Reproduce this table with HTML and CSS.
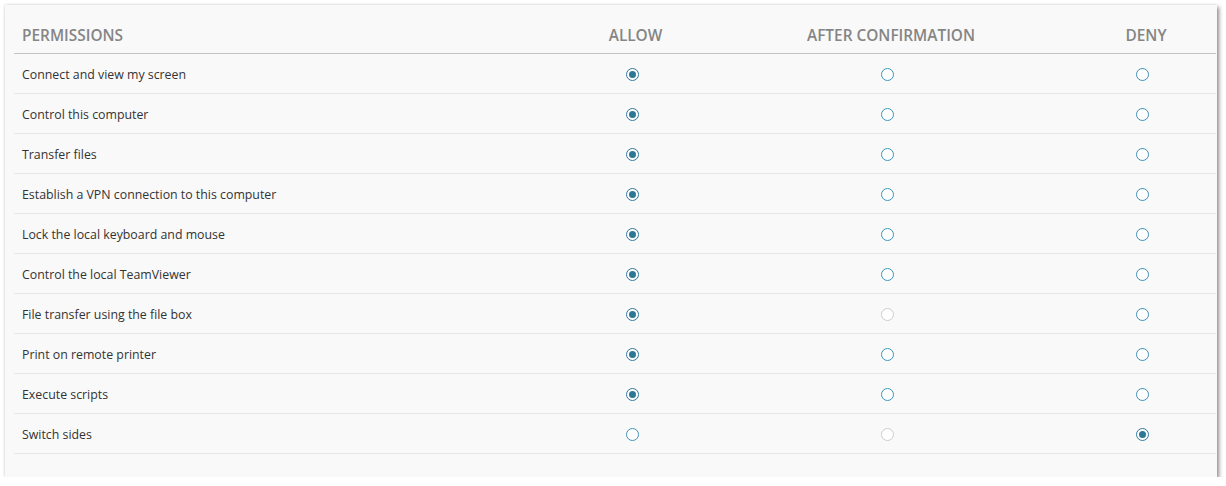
FILE: index.html
```html
<!DOCTYPE html>
<html lang="en">
<head>
<meta charset="utf-8">
<title>Permissions</title>
<link rel="stylesheet" href="styles.css">
</head>
<body>
<div class="card">
  <div class="table">
    <div class="row head">
      <div class="cell name">PERMISSIONS</div>
      <div class="cell">ALLOW</div>
      <div class="cell">AFTER CONFIRMATION</div>
      <div class="cell">DENY</div>
    </div>
    <div class="row">
      <div class="cell name">Connect and view my screen</div>
      <div class="cell"><span class="radio on"></span></div>
      <div class="cell"><span class="radio"></span></div>
      <div class="cell"><span class="radio"></span></div>
    </div>
    <div class="row">
      <div class="cell name">Control this computer</div>
      <div class="cell"><span class="radio on"></span></div>
      <div class="cell"><span class="radio"></span></div>
      <div class="cell"><span class="radio"></span></div>
    </div>
    <div class="row">
      <div class="cell name">Transfer files</div>
      <div class="cell"><span class="radio on"></span></div>
      <div class="cell"><span class="radio"></span></div>
      <div class="cell"><span class="radio"></span></div>
    </div>
    <div class="row">
      <div class="cell name">Establish a VPN connection to this computer</div>
      <div class="cell"><span class="radio on"></span></div>
      <div class="cell"><span class="radio"></span></div>
      <div class="cell"><span class="radio"></span></div>
    </div>
    <div class="row">
      <div class="cell name">Lock the local keyboard and mouse</div>
      <div class="cell"><span class="radio on"></span></div>
      <div class="cell"><span class="radio"></span></div>
      <div class="cell"><span class="radio"></span></div>
    </div>
    <div class="row">
      <div class="cell name">Control the local TeamViewer</div>
      <div class="cell"><span class="radio on"></span></div>
      <div class="cell"><span class="radio"></span></div>
      <div class="cell"><span class="radio"></span></div>
    </div>
    <div class="row">
      <div class="cell name">File transfer using the file box</div>
      <div class="cell"><span class="radio on"></span></div>
      <div class="cell"><span class="radio disabled"></span></div>
      <div class="cell"><span class="radio"></span></div>
    </div>
    <div class="row">
      <div class="cell name">Print on remote printer</div>
      <div class="cell"><span class="radio on"></span></div>
      <div class="cell"><span class="radio"></span></div>
      <div class="cell"><span class="radio"></span></div>
    </div>
    <div class="row">
      <div class="cell name">Execute scripts</div>
      <div class="cell"><span class="radio on"></span></div>
      <div class="cell"><span class="radio"></span></div>
      <div class="cell"><span class="radio"></span></div>
    </div>
    <div class="row">
      <div class="cell name">Switch sides</div>
      <div class="cell"><span class="radio"></span></div>
      <div class="cell"><span class="radio disabled"></span></div>
      <div class="cell"><span class="radio on"></span></div>
    </div>
  </div>
</div>
</body>
</html>
```
FILE: styles.css
```css
html, body {
  margin: 0;
  padding: 0;
  background: #ffffff;
}

body {
  font-family: "Open Sans", "Noto Sans", sans-serif;
  color: #333333;
}

.card {
  margin: 5px 0 0 5px;
  width: 1212px;
  height: 472px;
  box-sizing: border-box;
  background: #f9f9f9;
  padding: 0 1px 0 9px;
  box-shadow: 2px 2px 4px rgba(0, 0, 0, 0.45), -1px -1px 2px rgba(0, 0, 0, 0.06);
}

.table {
  display: flex;
  flex-direction: column;
}

.row {
  display: grid;
  grid-template-columns: 551px 141px 370px 140px;
  height: 40px;
  box-sizing: border-box;
  border-bottom: 1px solid #e6e6e6;
  align-items: center;
  padding-top: 1px;
}

.row.head {
  height: 49px;
  border-bottom: 1px solid #c4c4c4;
  padding-top: 12px;
}

.cell {
  display: flex;
  justify-content: center;
  align-items: center;
  font-size: 12.35px;
}

.cell.name {
  justify-content: flex-start;
  padding-left: 8px;
}

.head .cell {
  font-size: 15.4px;
  font-weight: 600;
  color: #858585;
}

.radio {
  width: 13px;
  height: 13px;
  box-sizing: border-box;
  border: 1px solid #3c93b8;
  border-radius: 50%;
  background: #ffffff;
  margin-right: 7px;
  position: relative;
}

.radio.on {
  border-color: #2f7b9c;
  border-width: 1.3px;
}

.radio.on::after {
  content: "";
  position: absolute;
  left: 2px;
  top: 2px;
  width: 7px;
  height: 7px;
  border-radius: 50%;
  background: #2e7696;
}

.radio.disabled {
  border-color: #cccccc;
}
```
